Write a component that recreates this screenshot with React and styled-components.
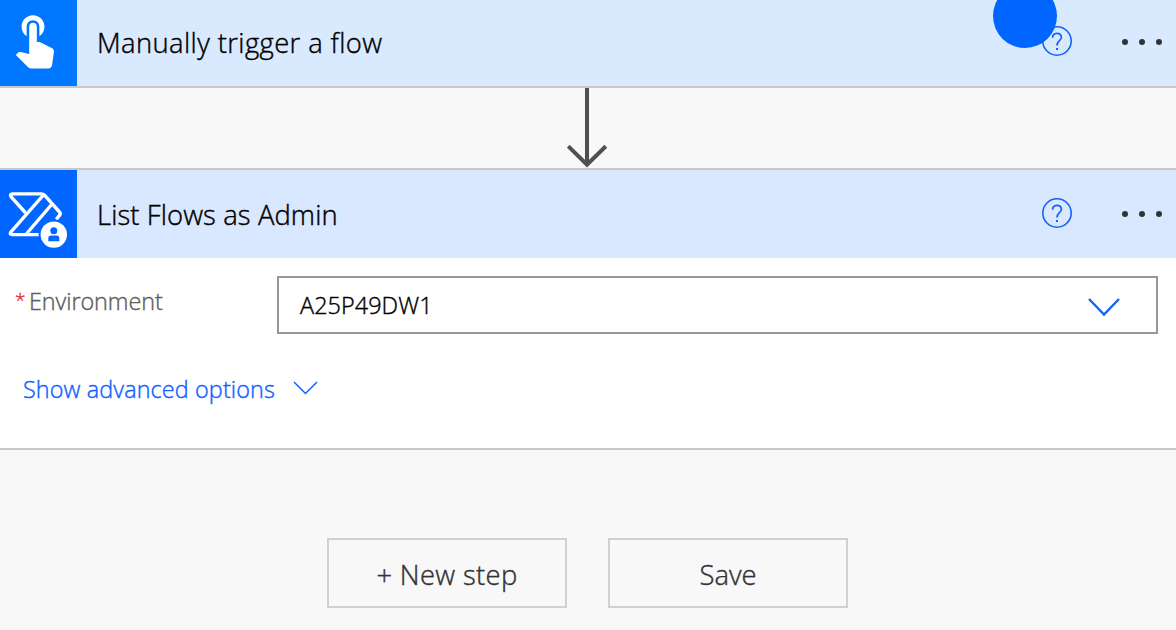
import React from "react";
import styled, { createGlobalStyle } from "styled-components";

const GlobalStyle = createGlobalStyle`
  * { box-sizing: border-box; }
  body {
    margin: 0;
    background: #f8f8f8;
    font-family: "Open Sans", "Noto Sans", sans-serif;
    font-weight: 300;
    -webkit-text-stroke: 0.4px currentColor;
  }
  svg { display: block; }
`;

const Designer = styled.main`
  position: relative;
  display: flex;
  flex-direction: column;
  width: 1176px;
  height: 630px;
  overflow: hidden;
`;

const Card = styled.section`
  background: #fff;
  border-bottom: 2px solid #c8c8c8;
  border-top: ${(p) => (p.$topRule ? "2px solid #c8c8c8" : "0")};
`;

const CardHeader = styled.header`
  display: flex;
  align-items: center;
  height: ${(p) => p.$height}px;
  background: ${(p) => p.$tint};
`;

const IconTile = styled.div`
  flex: none;
  width: 77px;
  height: 100%;
  background: ${(p) => p.$color};
`;

const CardTitle = styled.h2`
  flex: 1;
  margin: 0;
  padding: ${(p) => p.$drop}px 0 0 20px;
  font-size: 27.4px;
  line-height: 38px;
  font-weight: inherit;
  letter-spacing: ${(p) => p.$tracking}px;
  color: #000;
  white-space: nowrap;
`;

const HeaderActions = styled.div`
  display: flex;
  align-items: center;
  gap: 49.5px;
  padding: 0 14.5px ${(p) => p.$lift}px 0;
`;

const BareButton = styled.button`
  padding: 0;
  border: 0;
  background: none;
  font: inherit;
`;

const HelpButton = styled(BareButton)`
  width: 32px;
  height: 32px;
`;

const MenuButton = styled(BareButton)`
  display: flex;
  align-items: center;
  gap: 10.6px;
  height: 32px;
  padding-top: 2px;
`;

const Dot = styled.span`
  width: 6px;
  height: 6px;
  border-radius: 50%;
  background: #333;
`;

const Connector = styled.div`
  display: flex;
  justify-content: center;
  height: 80px;
`;

const CardBody = styled.div`
  height: 190px;
  padding: 18px 18px 0 15px;
`;

const Field = styled.div`
  display: flex;
`;

const Label = styled.label`
  display: flex;
  width: 262px;
  padding-top: 8px;
  font-size: 23.4px;
  line-height: 34px;
  letter-spacing: ${(p) => p.$tracking}px;
  color: #5f5e5c;
`;

const Required = styled.span`
  width: 14px;
  font-size: 19px;
  line-height: 33px;
  color: #e5322d;
`;

const SelectBox = styled.div`
  display: flex;
  flex: 1;
  align-items: center;
  justify-content: space-between;
  height: 58px;
  padding: 0 36px 0 21px;
  border: 2px solid #979797;
  font-size: 23.4px;
  letter-spacing: ${(p) => p.$tracking}px;
  color: #000;

  svg {
    margin-top: 4px;
  }
`;

const AdvancedToggle = styled(BareButton)`
  display: flex;
  align-items: center;
  gap: 18px;
  margin: 38px 0 0 8px;
  font-size: 23.4px;
  line-height: 34px;
  letter-spacing: ${(p) => p.$tracking}px;
  color: #0f62fe;

  svg {
    margin-bottom: 2px;
  }
`;

const Footer = styled.footer`
  display: flex;
  justify-content: center;
  gap: 41px;
  padding: 88px 1px 0 0;
`;

const ActionButton = styled(BareButton)`
  width: 240px;
  height: 70px;
  padding-top: 2px;
  border: 2px solid #d1d1d1;
  font-size: 27.4px;
  letter-spacing: ${(p) => p.$tracking}px;
  color: #333;
`;

const Pointer = styled.div`
  position: absolute;
  top: -16px;
  left: 993px;
  width: 64px;
  height: 64px;
  border-radius: 50%;
  background: #0066ff;
`;

const TouchIcon = () => (
  <svg width="77" height="86" viewBox="0 0 77 86" fill="#fff">
    <path
      transform="translate(3.8 7.6) scale(2.54)"
      d="M9 11.24V7.5C9 6.12 10.12 5 11.5 5S14 6.12 14 7.5v3.74c1.21-.81 2-2.18 2-3.74C16 5.01 13.99 3 11.5 3S7 5.01 7 7.5c0 1.56.79 2.93 2 3.74zm9.84 4.63l-4.54-2.26c-.17-.07-.35-.11-.54-.11H13v-6c0-.83-.67-1.5-1.5-1.5S10 6.67 10 7.5v10.74l-3.43-.72c-.08-.01-.15-.03-.24-.03-.31 0-.59.13-.79.33l-.79.8 4.94 4.94c.27.27.65.44 1.06.44h6.79c.75 0 1.33-.55 1.44-1.28l.75-5.27c.01-.07.02-.14.02-.2 0-.62-.38-1.16-.91-1.38z"
    />
  </svg>
);

const FlowAdminIcon = () => (
  <svg width="77" height="88" viewBox="0 0 77 88" fill="none">
    <g stroke="#fff" strokeWidth="3.4" strokeLinejoin="round" strokeLinecap="round">
      <path d="M38.5 64.6H12.2Q9 64.6 11 61.9L43 25.5" />
      <path d="M24.8 42L11.2 26.9Q9.3 23.9 12.6 23.9H41.5Q43.3 23.9 44.5 25.2L59.5 42Q61 43.7 59.5 45.3L57 48.3" />
      <path d="M50.8 35.5L26.3 64" />
    </g>
    <circle cx="53.8" cy="64.6" r="15.2" fill="#0066ff" />
    <circle cx="53.8" cy="64.6" r="13.2" fill="#fff" />
    <circle cx="53.8" cy="60.7" r="3.5" fill="#0066ff" />
    <path d="M48.3 71.3v-3q0-2.8 2.8-2.8h5.4q2.8 0 2.8 2.8v3z" fill="#0066ff" />
  </svg>
);

const HelpIcon = () => (
  <svg width="32" height="32" viewBox="0 0 32 32" fill="none" stroke="#0f62fe">
    <circle cx="16" cy="16" r="14.2" strokeWidth="1.6" />
    <path d="M11.6 12.8C11.6 7 20.4 7 20.4 12.2C20.4 15.8 16 15.8 16 20.5" strokeWidth="1.7" />
    <rect x="15" y="23" width="2" height="2" fill="#0f62fe" stroke="none" />
  </svg>
);

const Chevron = ({ width, height, weight }) => (
  <svg width={width} height={height} viewBox={`0 0 ${width} ${height}`} fill="none">
    <path
      d={`M1 1L${width / 2} ${height - 1.5}L${width - 1} 1`}
      stroke="#0f62fe"
      strokeWidth={weight}
    />
  </svg>
);

const ArrowDown = () => (
  <svg width="42" height="80" viewBox="0 0 42 80" fill="none" stroke="#505050" strokeWidth="4">
    <path d="M20 0V76" />
    <path d="M1.2 58.2L20 76.6L38.8 58.2" />
  </svg>
);

const StepHeader = ({ title, height, tint, tile, icon, tracking, drop, lift }) => (
  <CardHeader $height={height} $tint={tint}>
    <IconTile $color={tile}>{icon}</IconTile>
    <CardTitle $tracking={tracking} $drop={drop}>
      {title}
    </CardTitle>
    <HeaderActions $lift={lift}>
      <HelpButton aria-label="Help">
        <HelpIcon />
      </HelpButton>
      <MenuButton aria-label="More commands">
        <Dot />
        <Dot />
        <Dot />
      </MenuButton>
    </HeaderActions>
  </CardHeader>
);

export default function App() {
  return (
    <>
      <GlobalStyle />
      <Designer>
        <Card>
          <StepHeader
            title="Manually trigger a flow"
            height={86}
            tint="#d9eaff"
            tile="#0077ff"
            icon={<TouchIcon />}
            tracking={0.4}
            drop={0}
            lift={4}
          />
        </Card>
        <Connector>
          <ArrowDown />
        </Connector>
        <Card $topRule>
          <StepHeader
            title="List Flows as Admin"
            height={88}
            tint="#d9e7ff"
            tile="#0066ff"
            icon={<FlowAdminIcon />}
            tracking={0.11}
            drop={2}
            lift={2}
          />
          <CardBody>
            <Field>
              <Label $tracking={-0.08}>
                <Required>*</Required>
                Environment
              </Label>
              <SelectBox $tracking={0.08}>
                A25P49DW1
                <Chevron width={32} height={18} weight={2.4} />
              </SelectBox>
            </Field>
            <AdvancedToggle $tracking={0.11}>
              Show advanced options
              <Chevron width={25} height={14} weight={1.5} />
            </AdvancedToggle>
          </CardBody>
        </Card>
        <Footer>
          <ActionButton $tracking={0.35}>+ New step</ActionButton>
          <ActionButton $tracking={0}>Save</ActionButton>
        </Footer>
        <Pointer />
      </Designer>
    </>
  );
}
